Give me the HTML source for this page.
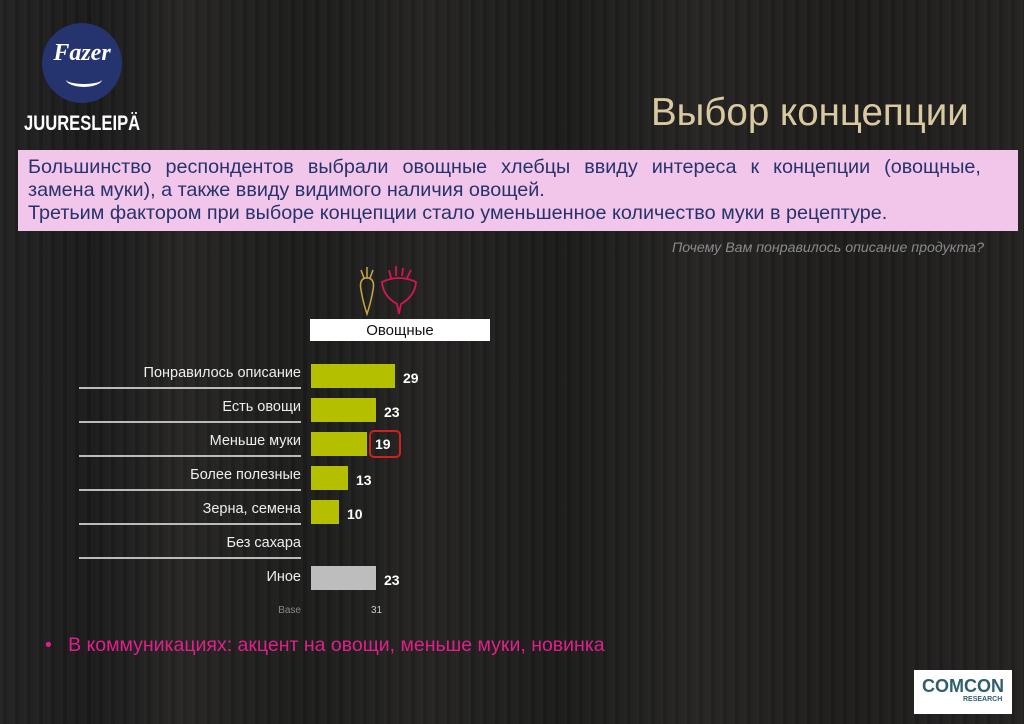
<!DOCTYPE html>
<html><head><meta charset="utf-8"><style>
body{margin:0;width:1024px;height:724px;overflow:hidden;background:#1e1d1c;font-family:"Liberation Sans",sans-serif;position:relative}
.bg{position:absolute;inset:0;background:
repeating-linear-gradient(90deg,rgba(255,255,255,0.025) 0 3px,rgba(0,0,0,0.06) 3px 7px,rgba(255,255,255,0.015) 7px 12px),
linear-gradient(90deg,#222 0,#1a1a1a 90px,#262524 180px,#1c1c1b 300px,#242322 430px,#1b1b1a 560px,#252423 700px,#1d1c1b 840px,#232221 1024px);}
.a{position:absolute}
.lbl{position:absolute;right:723px;font-size:14.5px;color:#eee;text-align:right;white-space:nowrap}
.ln{position:absolute;left:79px;width:222px;height:2px;background:#bbb}
.bar{position:absolute;left:311px;height:24px;background:#b4bf00}
.v{position:absolute;font-size:14px;font-weight:bold;color:#fff}
</style></head><body>
<div class="bg"></div>
<div class="a" style="left:42px;top:23px;width:80px;height:80px;border-radius:50%;background:#25336e"></div>
<div class="a" style="left:51px;top:40px;width:62px;text-align:center;font-family:'Liberation Serif',serif;font-style:italic;font-weight:bold;font-size:24px;color:#fff">Fazer</div>
<div class="a" style="left:66px;top:72px;width:36px;height:12px;border-bottom:3px solid #fff;border-radius:0 0 50% 50%"></div>
<div class="a" style="left:24px;top:112px;font-size:21px;font-weight:bold;color:#fff;transform:scaleX(0.79);transform-origin:left">JUURESLEIPÄ</div>
<div class="a" style="left:651px;top:91px;font-size:38.5px;color:#d8c9a0">Выбор концепции</div>
<div class="a" style="left:18px;top:150px;width:1000px;height:81px;background:#f2c6ea"></div>
<div class="a" style="left:28px;top:156px;width:953px;font-size:19.8px;line-height:23px;color:#26336a">
<div style="text-align:justify;text-align-last:justify;white-space:nowrap;display:flex;justify-content:space-between"><span>Большинство</span><span>респондентов</span><span>выбрали</span><span>овощные</span><span>хлебцы</span><span>ввиду</span><span>интереса</span><span>к</span><span>концепции</span><span>(овощные,</span></div>
<div>замена муки), а также ввиду видимого наличия овощей.</div>
<div>Третьим фактором при выборе концепции стало уменьшенное количество муки в рецептуре.</div>
</div>
<div class="a" style="left:672px;top:240px;font-size:14.2px;font-style:italic;color:#8a8a8a;white-space:nowrap">Почему Вам понравилось описание продукта?</div>
<svg class="a" style="left:355px;top:258px" width="70" height="60" viewBox="0 0 70 60" fill="none">
<path d="M10 20 Q4 22 6 32 Q8 44 12 56 Q16 44 18 32 Q20 22 14 20 Z M12 20 V9 M9 20 L6 12 M15 20 L18 12" stroke="#c9a74a" stroke-width="1.5"/>
<path d="M27 24 Q28 38 42 46 L44 56 L46 46 Q60 38 61 24 Q44 16 27 24 Z M36 20 L34 12 M41 18 L41 8 M47 18 L48 10 M52 20 L56 12" stroke="#d0184e" stroke-width="1.8"/>
</svg>
<div class="a" style="left:310px;top:319px;width:180px;height:22px;background:#fff;text-align:center;font-size:15px;line-height:23px;color:#111">Овощные</div>
<div class="lbl" style="top:365px">Понравилось описание</div>
<div class="lbl" style="top:399px">Есть овощи</div>
<div class="lbl" style="top:433px">Меньше муки</div>
<div class="lbl" style="top:467px">Более полезные</div>
<div class="lbl" style="top:501px">Зерна, семена</div>
<div class="lbl" style="top:535px">Без сахара</div>
<div class="lbl" style="top:569px">Иное</div>
<div class="lbl" style="top:605px;font-size:10px;color:#888">Base</div>
<div class="ln" style="top:387px"></div><div class="ln" style="top:421px"></div><div class="ln" style="top:455px"></div><div class="ln" style="top:489px"></div><div class="ln" style="top:523px"></div><div class="ln" style="top:557px"></div>
<div class="bar" style="top:364px;width:84px"></div><div class="v" style="left:403px;top:370px">29</div>
<div class="bar" style="top:398px;width:65px"></div><div class="v" style="left:384px;top:404px">23</div>
<div class="bar" style="top:432px;width:56px"></div>
<div class="a" style="left:369px;top:430px;width:32px;height:28px;border:2px solid #d02020;border-radius:5px;box-sizing:border-box"></div><div class="v" style="left:375px;top:436px">19</div>
<div class="bar" style="top:466px;width:37px"></div><div class="v" style="left:356px;top:472px">13</div>
<div class="bar" style="top:500px;width:28px"></div><div class="v" style="left:347px;top:506px">10</div>
<div class="bar" style="top:566px;width:65px;background:#bdbdbd"></div><div class="v" style="left:384px;top:572px">23</div>
<div class="a" style="left:371px;top:605px;font-size:10px;color:#ccc">31</div>
<div class="a" style="left:45px;top:634px;font-size:19.5px;color:#e0208a;white-space:nowrap">•&nbsp;&nbsp;&nbsp;В коммуникациях: акцент на овощи, меньше муки, новинка</div>
<div class="a" style="left:914px;top:670px;width:98px;height:44px;background:#fff"></div>
<div class="a" style="left:922px;top:676px;font-size:18px;font-weight:bold;color:#2f5f6c">COMCON</div>
<div class="a" style="left:963px;top:696px;font-size:7px;font-weight:bold;color:#2f5f6c">RESEARCH</div>
</body></html>
